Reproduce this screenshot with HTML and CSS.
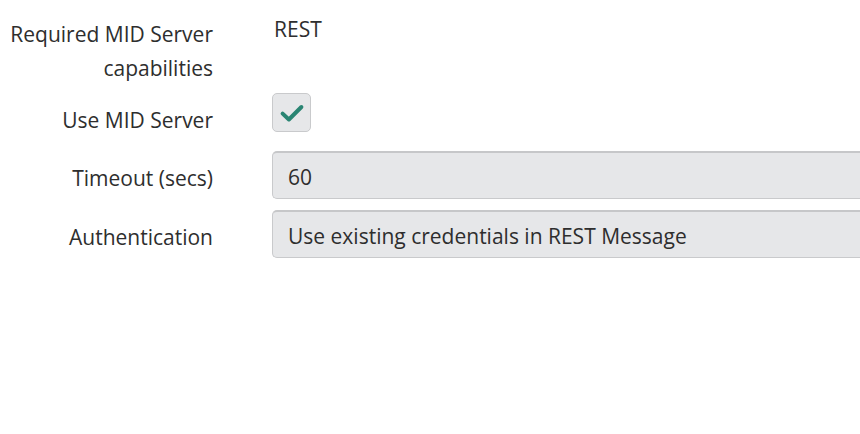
FILE: index.html
```html
<!DOCTYPE html>
<html>
<head>
<meta charset="utf-8">
<link rel="stylesheet" href="styles.css">
</head>
<body>
<div class="form">
  <div class="row row-caps">
    <div class="label">Required MID Server capabilities</div>
    <div class="value">REST</div>
  </div>
  <div class="row row-check">
    <div class="label">Use MID Server</div>
    <div class="field">
      <span class="checkbox">
        <svg viewBox="0 0 24 24" width="30" height="30"><path d="M4.5 12.5 L9.5 17.2 L19.5 7.2" fill="none" stroke="#2a8573" stroke-width="3.2" stroke-linecap="round" stroke-linejoin="round"/></svg>
      </span>
    </div>
  </div>
  <div class="row row-input">
    <div class="label">Timeout (secs)</div>
    <div class="field"><div class="input">60</div></div>
  </div>
  <div class="row row-input row-last">
    <div class="label">Authentication</div>
    <div class="field"><div class="input">Use existing credentials in REST Message</div></div>
  </div>
</div>
</body>
</html>
```

FILE: styles.css
```css
html, body {
  margin: 0;
  padding: 0;
  background: #ffffff;
  overflow: hidden;
}
body {
  font-family: "Open Sans", "Noto Sans", sans-serif;
  font-size: 21px;
  color: #2e2e2e;
  width: 860px;
  height: 434px;
}
.form {
  padding-top: 17px;
}
.row {
  display: grid;
  grid-template-columns: 213px 1fr;
  column-gap: 59px;
}
.label {
  text-align: right;
  line-height: 34px;
}
.row-caps .value {
  line-height: 34px;
  margin-top: -5px;
  padding-left: 2px;
}
.row-check {
  margin-top: 8px;
}
.row-check .label {
  padding-top: 10px;
}
.checkbox {
  display: flex;
  align-items: center;
  justify-content: center;
  width: 37px;
  height: 37px;
  box-sizing: content-box;
  background: #e6e7e9;
  border: 1px solid #c9cacc;
  border-radius: 5px;
}
.row-input {
  margin-top: 14px;
}
.row-last {
  margin-top: 11px;
}
.row-input .label {
  padding-top: 10px;
}
.input {
  height: 45px;
  box-sizing: content-box;
  background: #e6e7e9;
  border: 1px solid #c9cacc;
  border-top: 2px solid #c6c7c9;
  border-right: none;
  border-radius: 5px 0 0 5px;
  padding: 0 0 0 15px;
  line-height: 48px;
}
```
